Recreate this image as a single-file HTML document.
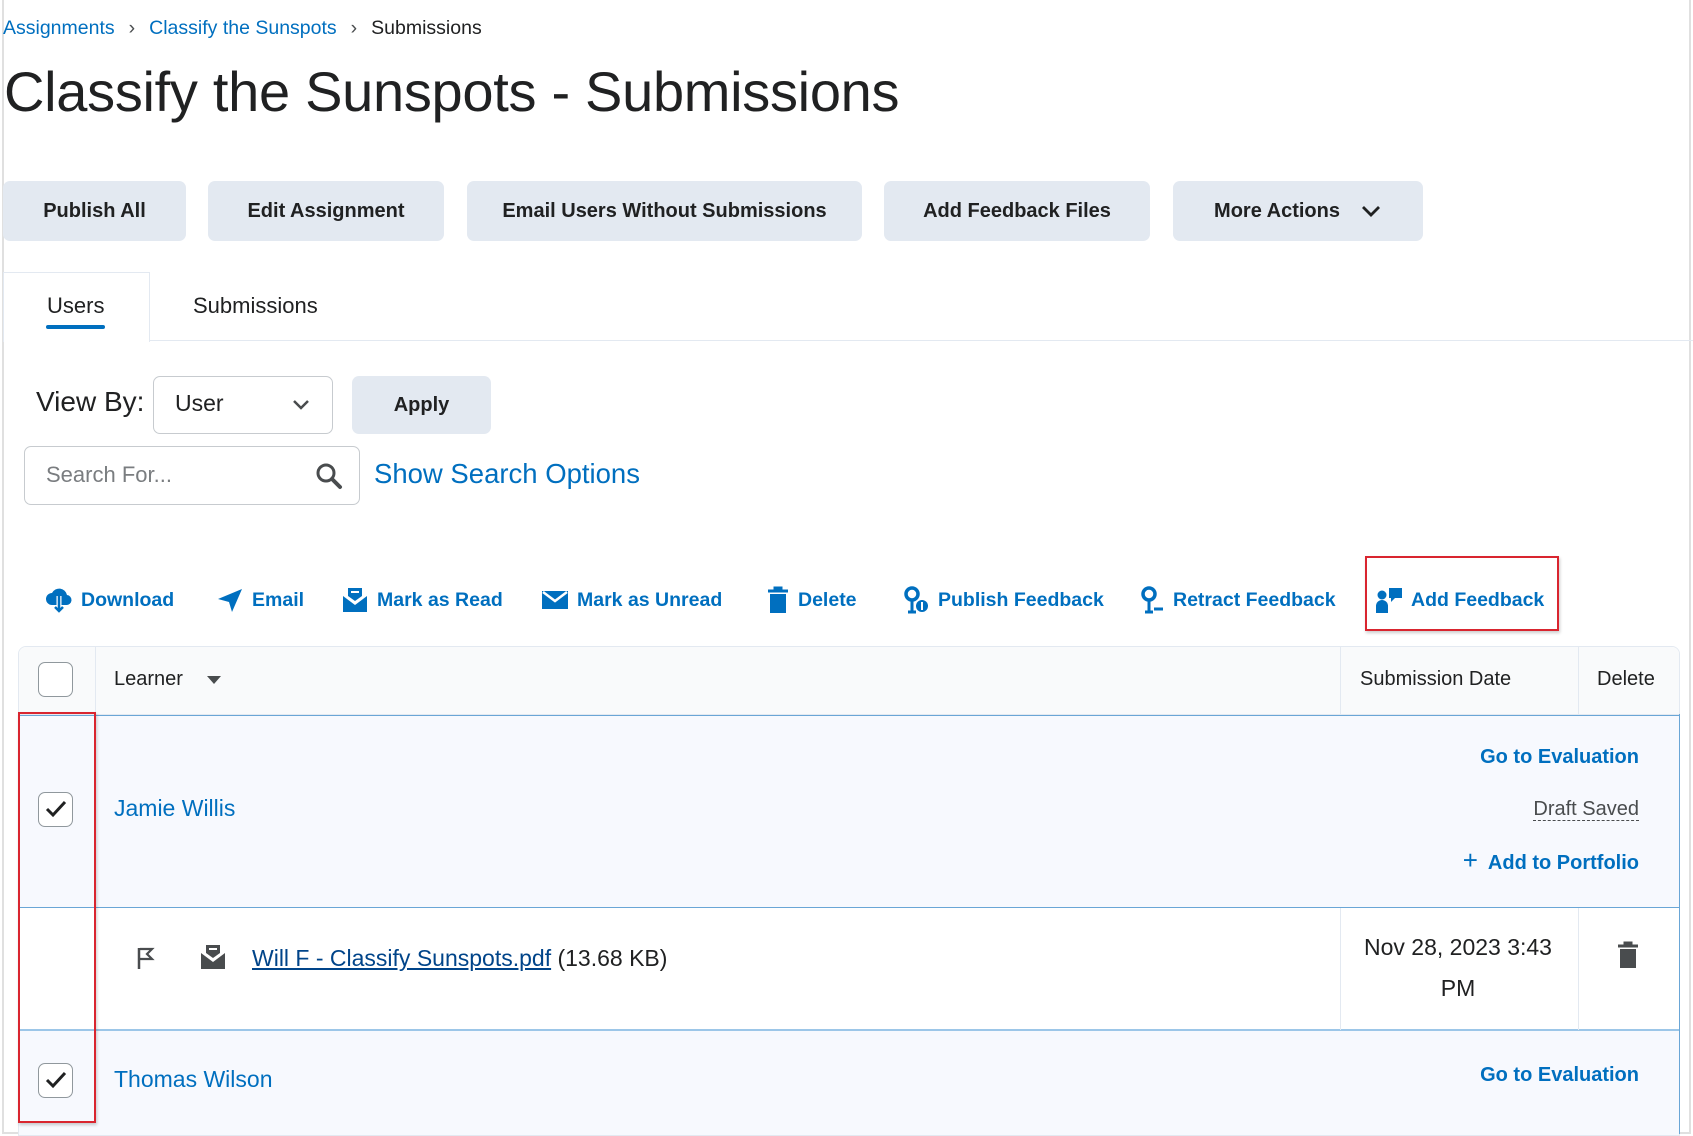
<!DOCTYPE html>
<html><head><meta charset="utf-8"><style>
*{box-sizing:border-box;margin:0;padding:0}
body{width:1693px;height:1135px;background:#fff;font-family:"Liberation Sans",sans-serif;color:#202122;position:relative;overflow:hidden}
.a{position:absolute;white-space:nowrap}
.blue{color:#006fbf}
.btn{position:absolute;top:181px;height:60px;background:#e3e9f1;border-radius:7px;font-weight:bold;font-size:20px;display:flex;align-items:center;justify-content:center;color:#202122}
.act{position:absolute;top:586px;height:28px;font-size:19.5px;font-weight:bold;color:#006fbf;display:flex;align-items:center}
.act svg{margin-right:8px}
.cb{position:absolute;width:35px;height:35px;border:1.5px solid #90989d;border-radius:7px;background:#fff}
</style></head><body>
<div class="a" style="left:2px;top:0;width:1689px;height:1134px;border:2px solid #e0e0e0;border-top:none"></div>

<div class="a" style="left:3px;top:17px;font-size:19.5px"><span class="blue">Assignments</span><span style="margin:0 14px;color:#494c4e">›</span><span class="blue">Classify the Sunspots</span><span style="margin:0 14px;color:#494c4e">›</span>Submissions</div>
<div class="a" style="left:4px;top:59px;font-size:56px;letter-spacing:-0.3px;color:#202122">Classify the Sunspots - Submissions</div>

<div class="btn" style="left:3px;width:183px">Publish All</div>
<div class="btn" style="left:208px;width:236px">Edit Assignment</div>
<div class="btn" style="left:467px;width:395px">Email Users Without Submissions</div>
<div class="btn" style="left:884px;width:266px">Add Feedback Files</div>
<div class="btn" style="left:1173px;width:250px">More Actions<svg width="22" height="14" viewBox="0 0 22 14" style="margin-left:20px"><path d="M3 3l8 8 8-8" fill="none" stroke="#202122" stroke-width="2.8"/></svg></div>

<div class="a" style="left:3px;top:272px;width:147px;height:70px;border:1px solid #e3e9f1;border-bottom:none;background:#fff"></div>
<div class="a" style="left:149px;top:340px;width:1544px;height:1px;background:#e3e9f1"></div>
<div class="a" style="left:47px;top:293px;font-size:22px">Users</div>
<div class="a" style="left:46px;top:325px;width:59px;height:4px;border-radius:2px;background:#006fbf"></div>
<div class="a" style="left:193px;top:293px;font-size:22px">Submissions</div>

<div class="a" style="left:36px;top:386px;font-size:28px">View By:</div>
<div class="a" style="left:153px;top:376px;width:180px;height:58px;border:1.5px solid #c7cbcf;border-radius:7px"></div>
<div class="a" style="left:175px;top:390px;font-size:23px">User</div>
<svg class="a" style="left:290px;top:398px" width="22" height="14" viewBox="0 0 22 14"><path d="M4 3l7 7 7-7" fill="none" stroke="#494c4e" stroke-width="2.5"/></svg>
<div class="btn" style="left:352px;top:376px;width:139px;height:58px">Apply</div>

<div class="a" style="left:24px;top:446px;width:336px;height:59px;border:1.5px solid #c7cbcf;border-radius:7px"></div>
<div class="a" style="left:46px;top:462px;font-size:22px;color:#7a7d80">Search For...</div>
<svg class="a" style="left:314px;top:461px" width="30" height="30" viewBox="0 0 30 30"><circle cx="12" cy="12" r="8" fill="none" stroke="#494c4e" stroke-width="3"/><path d="M18 18l8 8" stroke="#494c4e" stroke-width="4" stroke-linecap="round"/></svg>
<div class="a blue" style="left:374px;top:458px;font-size:27.5px">Show Search Options</div>

<div class="act" style="left:45px"><svg width="28" height="26" viewBox="0 0 28 26"><path d="M7 18a6 6 0 0 1 0-12 8 8 0 0 1 15 2 5 5 0 0 1-1 10z" fill="#006fbf"/><path d="M14 9v15M10 20l4 4 4-4" stroke="#fff" stroke-width="5"/><path d="M14 9v15M10 20l4 4 4-4" stroke="#006fbf" stroke-width="2.5" fill="none"/></svg>Download</div>
<div class="act" style="left:216px"><svg width="28" height="26" viewBox="0 0 28 26"><path d="M2 12L26 2 16 25 13 15z" fill="#006fbf"/></svg>Email</div>
<div class="act" style="left:341px"><svg width="28" height="28" viewBox="0 0 28 28"><path d="M7 2h14v8l-7 5-7-5z" fill="#006fbf"/><path d="M2 10l12 9 12-9v16H2z" fill="#006fbf"/><path d="M10 6h8" stroke="#fff" stroke-width="2"/></svg>Mark as Read</div>
<div class="act" style="left:541px"><svg width="28" height="22" viewBox="0 0 28 22"><path d="M1 2h26v18H1z" fill="#006fbf"/><path d="M2 3l12 9 12-9" stroke="#fff" stroke-width="2.5" fill="none"/></svg>Mark as Unread</div>
<div class="act" style="left:766px"><svg width="24" height="28" viewBox="0 0 24 28"><path d="M2 5h20M9 5V2h6v3" stroke="#006fbf" stroke-width="3" fill="none"/><path d="M4 8h16v19H4z" fill="#006fbf"/></svg>Delete</div>
<div class="act" style="left:902px"><svg width="28" height="28" viewBox="0 0 28 28"><circle cx="10" cy="8" r="6" fill="none" stroke="#006fbf" stroke-width="3.5"/><path d="M10 14v12M6 26h8" stroke="#006fbf" stroke-width="3"/><circle cx="20" cy="20" r="6" fill="#006fbf"/><path d="M20 16v8" stroke="#fff" stroke-width="2"/></svg>Publish Feedback</div>
<div class="act" style="left:1139px"><svg width="26" height="28" viewBox="0 0 26 28"><circle cx="10" cy="8" r="6" fill="none" stroke="#006fbf" stroke-width="3.5"/><path d="M10 14v12M6 26h8M15 23h9" stroke="#006fbf" stroke-width="3"/></svg>Retract Feedback</div>
<div class="act" style="left:1375px"><svg width="28" height="28" viewBox="0 0 28 28"><circle cx="7" cy="9" r="4.5" fill="#006fbf"/><path d="M1 27v-7a6 6 0 0 1 12 0v7z" fill="#006fbf"/><path d="M14 2h13v10h-7l-4 4v-4h-2z" fill="#006fbf"/></svg>Add Feedback</div>
<div class="a" style="left:1365px;top:556px;width:194px;height:75px;border:2px solid #d9252f;box-shadow:1px 2px 3px rgba(0,0,0,.2)"></div>

<!-- table -->
<div class="a" style="left:18px;top:646px;width:1662px;height:490px;border:1px solid #e3e9f1;border-radius:8px 8px 0 0;overflow:hidden">
 <div class="a" style="left:0;top:0;width:1662px;height:68px;background:#f9fafb;border-bottom:1px solid #e3e9f1"></div>
 <div class="a" style="left:0;top:68px;width:1662px;height:193px;background:#f7f9fe;border-top:1px solid #6aa6d6;border-bottom:1px solid #6aa6d6"></div>
 <div class="a" style="left:0;top:261px;width:1662px;height:122px;background:#fff"></div>
 <div class="a" style="left:0;top:382px;width:1662px;height:110px;background:#f7f9fe;border-top:2px solid #9cc6e8;border-bottom:1px solid #6aa6d6"></div>
 <div class="a" style="left:76px;top:0;width:1px;height:68px;background:#e3e9f1"></div>
 <div class="a" style="left:76px;top:261px;width:1px;height:122px;background:#e3e9f1"></div>
 <div class="a" style="left:1321px;top:0;width:1px;height:68px;background:#e3e9f1"></div>
 <div class="a" style="left:1559px;top:0;width:1px;height:68px;background:#e3e9f1"></div>
 <div class="a" style="left:1321px;top:261px;width:1px;height:122px;background:#e3e9f1"></div>
 <div class="a" style="left:1559px;top:261px;width:1px;height:122px;background:#e3e9f1"></div>
</div>
<div class="a" style="left:1679px;top:714px;width:1px;height:420px;background:#6aa6d6"></div>

<div class="cb" style="left:38px;top:662px"></div>
<div class="a" style="left:114px;top:668px;font-size:20px">Learner</div>
<svg class="a" style="left:206px;top:675px" width="16" height="10" viewBox="0 0 16 10"><path d="M1 1h14L8 9z" fill="#494c4e"/></svg>
<div class="a" style="left:1360px;top:668px;font-size:20px">Submission Date</div>
<div class="a" style="left:1597px;top:668px;font-size:20px">Delete</div>

<div class="cb" style="left:38px;top:792px"></div>
<svg class="a" style="left:44px;top:799px" width="24" height="20" viewBox="0 0 24 20"><path d="M3 10l6 6L21 3" fill="none" stroke="#202122" stroke-width="3"/></svg>
<div class="a blue" style="left:114px;top:795px;font-size:23px">Jamie Willis</div>
<div class="a blue" style="right:54px;top:746px;font-size:20px;font-weight:bold">Go to Evaluation</div>
<div class="a" style="right:54px;top:798px;font-size:20px;color:#494c4e;border-bottom:1.5px dashed #494c4e;line-height:22px">Draft Saved</div>
<div class="a blue" style="right:54px;top:845px;font-size:20px;font-weight:bold"><span style="font-size:26px;margin-right:10px;font-weight:normal">+</span>Add to Portfolio</div>

<svg class="a" style="left:136px;top:946px" width="20" height="24" viewBox="0 0 20 24"><path d="M3 2v21" stroke="#494c4e" stroke-width="2.5"/><path d="M4 3h12l-5 5 5 5H4" fill="none" stroke="#494c4e" stroke-width="2.2"/></svg>
<svg class="a" style="left:199px;top:943px" width="28" height="28" viewBox="0 0 28 28"><path d="M7 2h14v8l-7 5-7-5z" fill="#494c4e"/><path d="M2 10l12 9 12-9v16H2z" fill="#494c4e"/><path d="M10 6h8" stroke="#fff" stroke-width="2"/></svg>
<div class="a" style="left:252px;top:945px;font-size:23px"><span style="color:#004489;text-decoration:underline">Will F - Classify Sunspots.pdf</span> (13.68 KB)</div>
<div class="a" style="left:1358px;width:200px;top:927px;font-size:23px;text-align:center;line-height:41px;white-space:normal">Nov 28, 2023 3:43 PM</div>
<svg class="a" style="left:1617px;top:941px" width="22" height="28" viewBox="0 0 22 28"><path d="M1 5h20M8 5V2h6v3" stroke="#494c4e" stroke-width="3" fill="none"/><path d="M3 8h16v19H3z" fill="#494c4e"/></svg>

<div class="cb" style="left:38px;top:1063px"></div>
<svg class="a" style="left:44px;top:1070px" width="24" height="20" viewBox="0 0 24 20"><path d="M3 10l6 6L21 3" fill="none" stroke="#202122" stroke-width="3"/></svg>
<div class="a blue" style="left:114px;top:1066px;font-size:23px">Thomas Wilson</div>
<div class="a blue" style="right:54px;top:1064px;font-size:20px;font-weight:bold">Go to Evaluation</div>

<div class="a" style="left:18px;top:712px;width:78px;height:411px;border:2px solid #d9252f;box-shadow:1px 2px 3px rgba(0,0,0,.2)"></div>
</body></html>
